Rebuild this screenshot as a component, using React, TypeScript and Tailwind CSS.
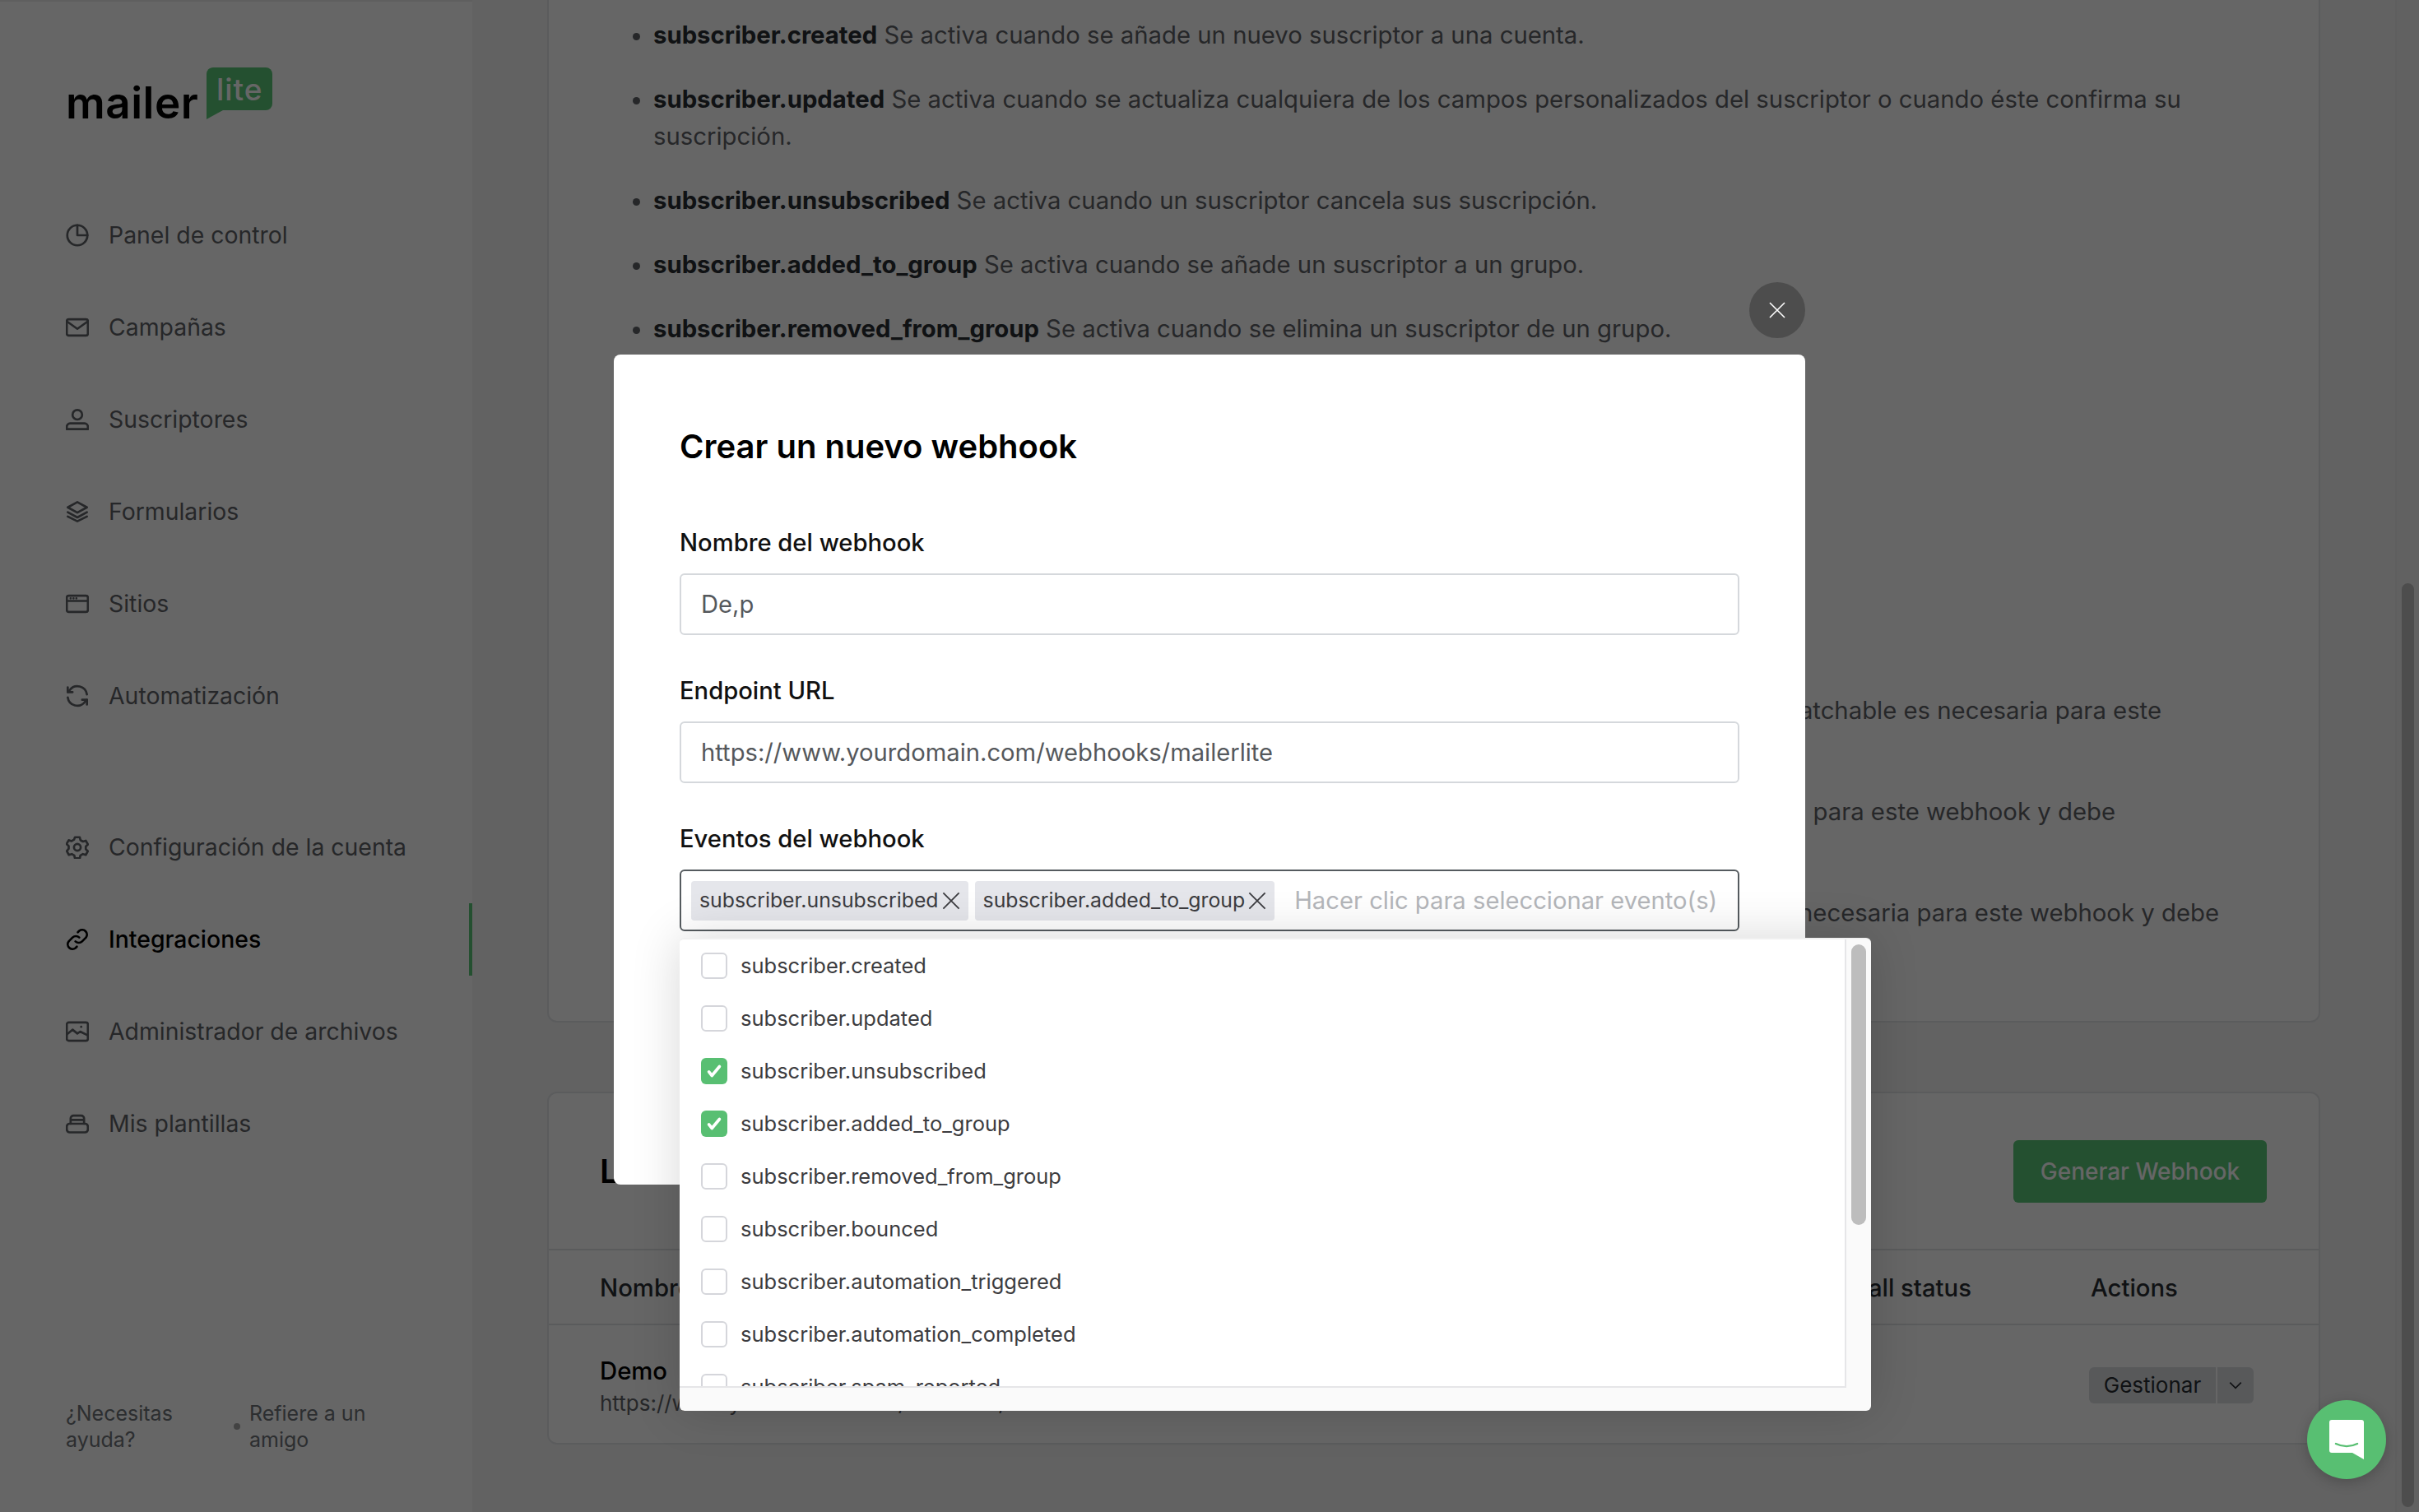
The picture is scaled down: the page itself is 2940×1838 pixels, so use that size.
import { ReactNode } from 'react';

function Icon({ children }: { children: ReactNode }) {
  return (
    <svg viewBox="0 0 24 24" fill="none" stroke="currentColor" strokeWidth="2.300" strokeLinecap="round" strokeLinejoin="round" className="shrink-0 w-7 h-7">
      {children}
    </svg>
  );
}

const topNav: { label: string; icon: ReactNode }[] = [
  { label: 'Panel de control', icon: <><circle cx="12" cy="12" r="10.500" /><path d="M12 1.500V12h10.500" /></> },
  { label: 'Campañas', icon: <><rect x="1" y="3.500" width="22" height="17" rx="2" /><path d="M1.500 6 12 13.500 22.500 6" /></> },
  { label: 'Suscriptores', icon: <><circle cx="12" cy="7" r="5" /><path d="M1 22v-2.500A3.500 3.500 0 0 1 4.500 16h15a3.500 3.500 0 0 1 3.500 3.500V22Z" /></> },
  { label: 'Formularios', icon: <><path d="M12 2 2 7.500 12 13l10-5.500Z" /><path d="m2 12.500 10 5.500 10-5.500" /><path d="m2 17 10 5 10-5" /></> },
  { label: 'Sitios', icon: <><rect x="1" y="3.500" width="22" height="17" rx="2" /><path d="M1 9h22M5 6.300h.01M8 6.300h.01M11 6.300h.01" /></> },
  { label: 'Automatización', icon: <><path d="M22 10.500A10 10 0 0 0 4 6L2 8" /><path d="M2 3v5h5" /><path d="M2 13.500A10 10 0 0 0 20 18l2-2" /><path d="M22 21v-5h-5" /></> },
];

const bottomNav: { label: string; active?: boolean; icon: ReactNode }[] = [
  { label: 'Configuración de la cuenta', icon: <><path d="M9.500 1.500h5l.7 3 2.600 1.500 3-.9 2.200 3.900-2.200 2.100v2.800l2.200 2.100-2.200 3.900-3-.9-2.600 1.500-.7 3h-5l-.7-3-2.600-1.500-3 .9-2.200-3.900L3 13.400v-2.800L.8 8.500 3 4.600l3 .9 2.600-1.500Z" /><circle cx="12" cy="12" r="3.500" /></> },
  { label: 'Integraciones', active: true, icon: <><path d="M10 14a5 5 0 0 0 7 0l4-4a5 5 0 0 0-7-7l-1.500 1.500" /><path d="M14 10a5 5 0 0 0-7 0l-4 4a5 5 0 0 0 7 7l1.500-1.500" /></> },
  { label: 'Administrador de archivos', icon: <><rect x="1" y="2.500" width="22" height="19" rx="2" /><path d="m1 15 6-5 5 4 3-2 8 4" /><path d="M16 7h.01" /></> },
  { label: 'Mis plantillas', icon: <><rect x="1" y="12" width="22" height="9" rx="3" /><path d="M5 12V6.500a3 3 0 0 1 3-3h8a3 3 0 0 1 3 3V12M5 8h14" /></> },
];

const events = [
  { name: 'subscriber.created', checked: false },
  { name: 'subscriber.updated', checked: false },
  { name: 'subscriber.unsubscribed', checked: true },
  { name: 'subscriber.added_to_group', checked: true },
  { name: 'subscriber.removed_from_group', checked: false },
  { name: 'subscriber.bounced', checked: false },
  { name: 'subscriber.automation_triggered', checked: false },
  { name: 'subscriber.automation_completed', checked: false },
  { name: 'subscriber.spam_reported', checked: false },
];

function NavRow({ label, icon, active }: { label: string; icon: ReactNode; active?: boolean }) {
  return (
    <div className={`relative h-[112px] flex items-center gap-[24px] pl-[80px] ${active ? 'text-[#000000] font-medium' : 'text-[#5f6368]'}`}>
      {icon}
      <span>{label}</span>
      {active && <div className="absolute right-0 top-[12px] w-1 h-[88px] bg-[#5ac878]" />}
    </div>
  );
}

function Sidebar() {
  return (
    <aside className="w-[574px] shrink-0 h-full bg-white border-t-2 border-[#eeeeee] flex flex-col text-[28.400px]">
      <div className="h-[228px] pl-[80px] pt-[80px] flex items-start gap-[10px]">
        <span className="mt-[11px] text-[53px] leading-[64px] font-semibold text-black tracking-[0.5px]">mailer</span>
        <div className="relative w-[80px] h-[52px] bg-[#5ac878] rounded-[8px] rounded-bl-none flex items-center justify-center">
          <span className="text-[37px] leading-none font-medium text-white tracking-[1px]">lite</span>
          <div className="absolute left-0 top-[52px] w-0 h-0 border-t-[11px] border-t-[#5ac878] border-r-[20px] border-r-transparent" />
        </div>
      </div>
      {topNav.map((n) => (
        <NavRow key={n.label} label={n.label} icon={<Icon>{n.icon}</Icon>} />
      ))}
      <div className="h-[72px]" />
      {bottomNav.map((n) => (
        <NavRow key={n.label} label={n.label} active={n.active} icon={<Icon>{n.icon}</Icon>} />
      ))}
      <div className="mt-auto mb-[72px] pl-[80px] flex items-center text-[25px] leading-[32px] text-[#6f7378]">
        <span className="w-[196px]">¿Necesitas ayuda?</span>
        <span className="w-[8px] h-[8px] rounded-full bg-[#a8a8a8] ml-[8px] mr-[11px]" />
        <span className="w-[180px]">Refiere a un amigo</span>
      </div>
    </aside>
  );
}

function Description() {
  return (
    <section className="mx-[91px] h-[1243px] shrink-0 bg-white border-x-2 border-b-2 border-[#e4e6e9] rounded-b-[12px] pt-[20px] pl-[127px] pr-[60px] text-[29.300px] leading-[45px] text-[#5f6368]">
      <ul className="list-disc flex flex-col gap-[33px]">
        <li><strong className="font-bold text-[#2a2e33]">subscriber.created</strong> Se activa cuando se añade un nuevo suscriptor a una cuenta.</li>
        <li><strong className="font-bold text-[#2a2e33]">subscriber.updated</strong> Se activa cuando se actualiza cualquiera de los campos personalizados del suscriptor o cuando éste confirma su suscripción.</li>
        <li><strong className="font-bold text-[#2a2e33]">subscriber.unsubscribed</strong> Se activa cuando un suscriptor cancela sus suscripción.</li>
        <li><strong className="font-bold text-[#2a2e33]">subscriber.added_to_group</strong> Se activa cuando se añade un suscriptor a un grupo.</li>
        <li><strong className="font-bold text-[#2a2e33]">subscriber.removed_from_group</strong> Se activa cuando se elimina un suscriptor de un grupo.</li>
      </ul>
      <div className="mt-[419px] flex flex-col gap-[78px]">
        <p className="text-right pr-[131px]">La propiedad batchable es necesaria para este</p>
        <p className="text-right pr-[187px]">La propiedad url es necesaria para este webhook y debe</p>
        <p className="text-right pr-[61px]">La propiedad events es necesaria para este webhook y debe</p>
      </div>
    </section>
  );
}

function WebhookTable() {
  return (
    <section className="mx-[91px] mt-[84px] h-[429px] shrink-0 bg-white border-2 border-[#e4e6e9] rounded-[12px] flex flex-col text-[29.300px]">
      <div className="h-[191px] border-b-2 border-[#e2e4e7] pl-[62px] pr-[63px] flex items-center justify-between">
        <h2 className="text-[40px] font-semibold text-black">Lista de webhooks</h2>
        <button className="w-[308px] h-[76px] mt-[1px] rounded-[6px] bg-[#5ac878] text-white text-[28px] font-medium">Generar Webhook</button>
      </div>
      <div className="h-[91px] pt-[3px] border-b-2 border-[#e2e4e7] pl-[62px] flex items-center font-medium text-[#2a2e33]">
        <span className="w-[1395px]">Nombre</span>
        <span className="w-[272px] text-right">Overall status</span>
        <span className="ml-[145px]">Actions</span>
      </div>
      <div className="flex-1 pl-[62px] flex items-center justify-between pr-[79px]">
        <div className="flex flex-col pt-[5px]">
          <span className="font-medium text-black leading-[44px]">Demo</span>
          <span className="-mt-[3px] text-[#5f6368] text-[26px] leading-[40px]">https://www.yourdomain.com/webhook/demo</span>
        </div>
        <div className="flex h-[44px] text-[26px] text-[#2a2e33] rounded-[6px] overflow-hidden mt-[2px]">
          <span className="w-[154px] bg-[#dcdee2] flex items-center justify-center">Gestionar</span>
          <span className="w-[44px] ml-[2px] bg-[#dcdee2] flex items-center justify-center">
            <svg viewBox="0 0 16 16" fill="none" stroke="currentColor" strokeWidth="1.500" className="w-[18px] h-[18px]">
              <path d="m2 5 6 6 6-6" />
            </svg>
          </span>
        </div>
      </div>
    </section>
  );
}

function EventOption({ name, checked }: { name: string; checked: boolean }) {
  return (
    <div className="h-[64px] shrink-0 flex items-center gap-[16px] pl-[26px]">
      {checked ? (
        <span className="w-[32px] h-[32px] rounded-[6px] bg-[#58bf72] flex items-center justify-center text-white">
          <svg viewBox="0 0 24 24" fill="none" stroke="currentColor" strokeWidth="4" strokeLinecap="round" strokeLinejoin="round" className="w-[22px] h-[22px]">
            <path d="m5 13 4 5L19 6" />
          </svg>
        </span>
      ) : (
        <span className="w-[32px] h-[32px] rounded-[6px] border-2 border-[#d5d6db] bg-white" />
      )}
      <span>{name}</span>
    </div>
  );
}

function EventDropdown() {
  return (
    <div className="absolute -left-[2px] top-[81px] w-[1448px] h-[575px] bg-[#fafafa] rounded-[6px] border-t-2 border-[#f0f0f0] shadow-[0_0_60px_rgba(0,0,0,0.16)] flex flex-col overflow-hidden">
      <div className="flex h-[545px]">
        <div className="w-[1418px] bg-white border-r-2 border-b-2 border-[#e6e6e8] overflow-hidden flex flex-col text-[25.500px] text-[#3c3c40]">
          {events.map((e) => (
            <EventOption key={e.name} name={e.name} checked={e.checked} />
          ))}
        </div>
        <div className="flex-1 px-[6px] pt-[6px]">
          <div className="h-[341px] rounded-full bg-[#bdbdbd]" />
        </div>
      </div>
    </div>
  );
}

function Tag({ label }: { label: string }) {
  return (
    <span className="h-[48px] pl-[10px] pr-[9px] rounded-[4px] bg-[#e5e6eb] flex items-center gap-[3px] text-[24.800px] text-[#3c3c40]">
      {label}
      <svg viewBox="0 0 20 20" fill="none" stroke="currentColor" strokeWidth="1.500" className="w-[24px] h-[24px]">
        <path d="m2 2 16 16M18 2 2 18" />
      </svg>
    </span>
  );
}

function Modal() {
  return (
    <div className="absolute left-[746px] top-[431px] w-[1448px] h-[1009px] bg-white rounded-[8px] px-[80px] pt-[86px] text-[29.200px]">
      <button className="absolute right-0 -top-[88px] w-[68px] h-[68px] rounded-full bg-[#4d4d4d] flex items-center justify-center text-white">
        <svg viewBox="0 0 20 20" fill="none" stroke="currentColor" strokeWidth="1.600" className="w-[20px] h-[20px]">
          <path d="m1 1 18 18M19 1 1 19" />
        </svg>
      </button>
      <h2 className="text-[40px] leading-[52px] font-semibold text-black">Crear un nuevo webhook</h2>
      <label className="block mt-[73px] leading-[36px] font-medium text-[#111111]">Nombre del webhook</label>
      <div className="mt-[19px] h-[75px] border-2 border-[#d5d8dc] rounded-[6px] flex items-center px-[24px] text-[#55585c]">De,p</div>
      <label className="block mt-[50px] leading-[36px] font-medium text-[#111111]">Endpoint URL</label>
      <div className="mt-[19px] h-[75px] border-2 border-[#d5d8dc] rounded-[6px] flex items-center px-[24px] text-[#55585c]">https://www.yourdomain.com/webhooks/mailerlite</div>
      <label className="block mt-[50px] leading-[36px] font-medium text-[#111111]">Eventos del webhook</label>
      <div className="relative mt-[19px] h-[75px] border-2 border-[#555b5f] rounded-[6px] flex items-center gap-[8px] pl-[12px]">
        <Tag label="subscriber.unsubscribed" />
        <Tag label="subscriber.added_to_group" />
        <span className="ml-[16px] text-[#b4b6ba] whitespace-nowrap">Hacer clic para seleccionar evento(s)</span>
        <EventDropdown />
      </div>
    </div>
  );
}

export default function App() {
  return (
    <div className='relative w-[2940px] h-[1838px] overflow-hidden flex bg-[#f4f5f6] font-["Inter",sans-serif]'>
      <Sidebar />
      <main className="flex-1 min-w-0 flex flex-col">
        <Description />
        <WebhookTable />
      </main>
      <div className="w-[29px] shrink-0 border-l-2 border-[#eeeeee] bg-[#f2f2f2] px-[6px] pt-[709px]">
        <div className="h-[1123px] rounded-full bg-[#c1c1c1]" />
      </div>

      <div className="absolute inset-0 bg-black/60" />
      <Modal />

      <button className="absolute left-[2804px] top-[1702px] w-[96px] h-[96px] rounded-full bg-[#58bf72] shadow-[0_4px_16px_rgba(0,0,0,0.2)] flex items-center justify-center">
        <svg viewBox="0 0 44 48" className="w-[44px] h-[48px]">
          <path d="M4 0h36a3 3 0 0 1 3 3v45l-14-8H4a3 3 0 0 1-3-3V3a3 3 0 0 1 3-3Z" fill="#ffffff" />
          <path d="M9 29c8 4 18 4 26 0" fill="none" stroke="#58bf72" strokeWidth="2.500" strokeLinecap="round" />
        </svg>
      </button>
    </div>
  );
}
